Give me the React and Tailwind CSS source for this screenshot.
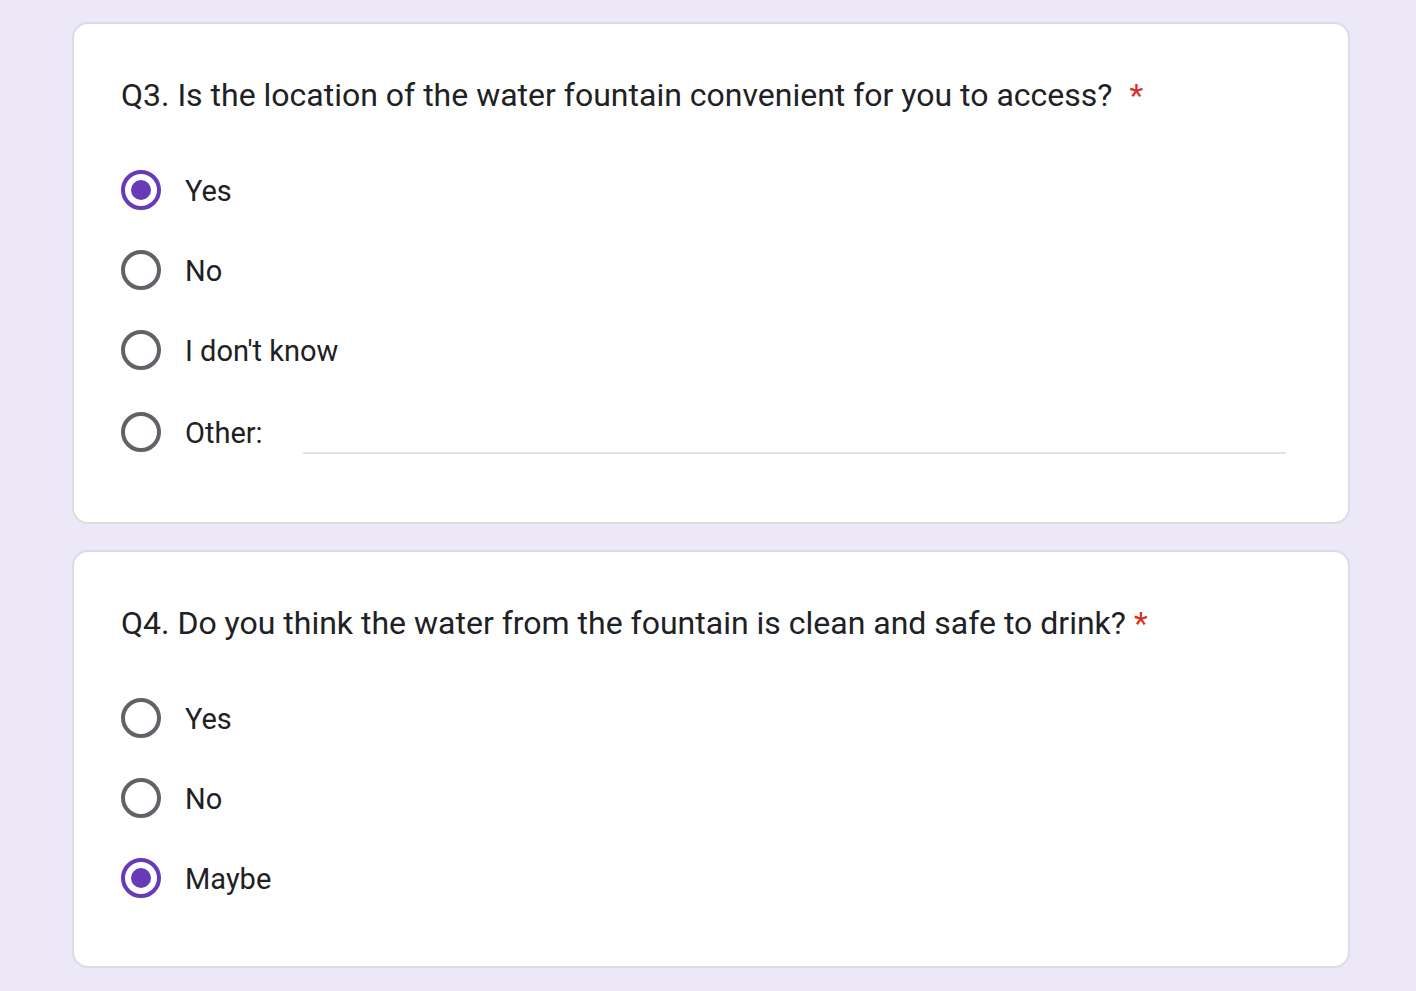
import React from "react";

function Radio({ checked }) {
  return (
    <div
      className={
        "flex h-[40px] w-[40px] shrink-0 items-center justify-center rounded-full border-[4px] " +
        (checked ? "border-[#673ab7]" : "border-[#5f6368]")
      }
    >
      {checked && <div className="h-[20px] w-[20px] rounded-full bg-[#673ab7]" />}
    </div>
  );
}

function Option({ label, checked, other }) {
  return (
    <div className={"flex items-center " + (other ? "h-[84px]" : "h-[80px]")}>
      <Radio checked={checked} />
      <span className="ml-[24px] pt-[2px] text-[29px] leading-[40px] text-[#202124]">{label}</span>
      {other && (
        <div className="ml-[40px] mt-[42px] h-[2px] w-[983px] bg-[#e3e3e3]" />
      )}
    </div>
  );
}

function Card({ question, starGap, children }) {
  return (
    <div className="w-[1278px] rounded-[16px] border-[2px] border-[#dadce0] bg-white pb-[48px] pl-[47px] pt-[51px]">
      <div className="flex items-center text-[32px] leading-[40px] text-[#202124]">
        <span>{question}</span>
        <span className={"text-[#d93025] " + starGap}>*</span>
      </div>
      <div className="mt-[35px]">{children}</div>
    </div>
  );
}

export default function App() {
  return (
    <div
      className="min-h-[991px] w-full bg-[#ece8f7] pl-[72px] pt-[22px]"
      style={{ fontFamily: "Roboto, 'Noto Sans', sans-serif" }}
    >
      <div className="flex flex-col gap-[26px]">
        <Card
          question="Q3. Is the location of the water fountain convenient for you to access?"
          starGap="ml-[17px]"
        >
          <Option label="Yes" checked />
          <Option label="No" />
          <Option label="I don't know" />
          <Option label="Other:" other />
        </Card>
        <Card
          question="Q4. Do you think the water from the fountain is clean and safe to drink?"
          starGap="ml-[8px]"
        >
          <Option label="Yes" />
          <Option label="No" />
          <Option label="Maybe" checked />
        </Card>
      </div>
    </div>
  );
}
